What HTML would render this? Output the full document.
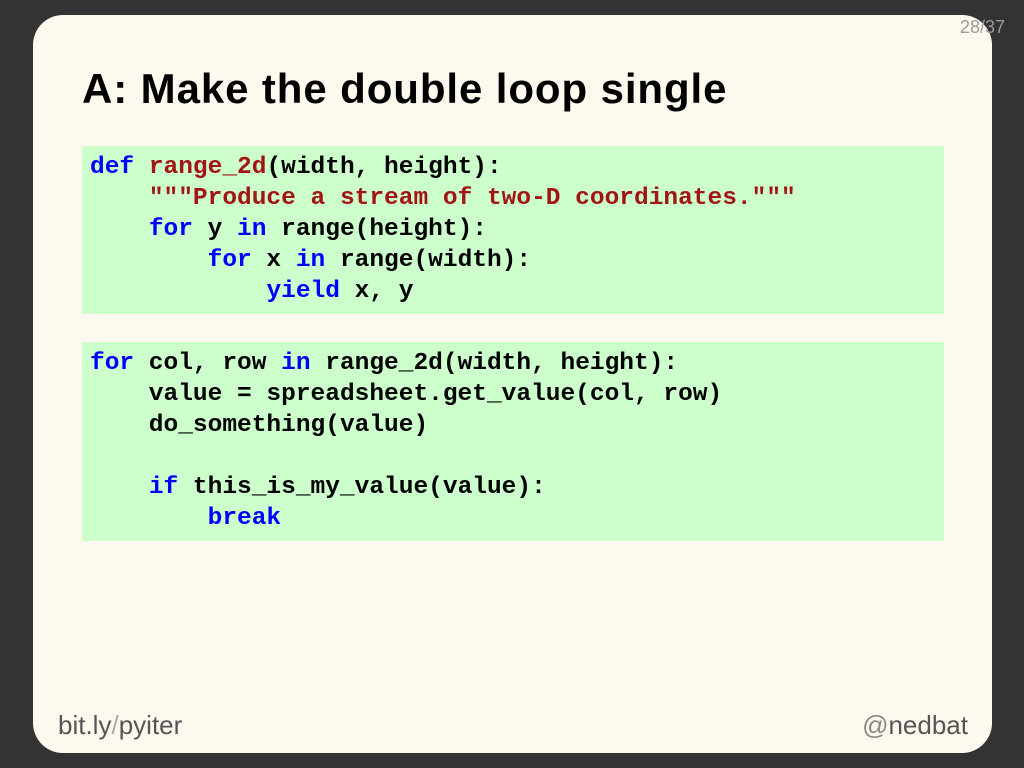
<!DOCTYPE html>
<html><head><style>
html,body{margin:0;padding:0;width:1024px;height:768px;background:#333;overflow:hidden}
.card{position:absolute;left:33px;top:15px;width:959px;height:738px;background:#fef9ef;border-radius:30px;}
.num{position:absolute;right:19px;top:17px;font:18px "Liberation Sans",sans-serif;color:#999}
h1{position:absolute;left:82px;top:64px;margin:0;font:bold 42px/50px "Liberation Sans",sans-serif;color:#000;letter-spacing:0.9px;white-space:nowrap}
pre{position:absolute;left:82px;width:854px;margin:0;padding:6px 0 0 8px;background:#ccffcc;font:bold 24.5px/31px "Liberation Mono",monospace;color:#000}
.k{color:#0000ff}.f{color:#a31515}
.foot{position:absolute;top:710px;font:26px "Liberation Sans",sans-serif;color:#555}
</style></head><body>
<div class="card"></div>
<div class="num">28/37</div>
<h1>A: Make the double loop single</h1>
<pre style="top:146px;height:162px"><span class="k">def</span> <span class="f">range_2d</span>(width, height):
    <span class="f">"""Produce a stream of two-D coordinates."""</span>
    <span class="k">for</span> y <span class="k">in</span> range(height):
        <span class="k">for</span> x <span class="k">in</span> range(width):
            <span class="k">yield</span> x, y</pre>
<pre style="top:342px;height:193px"><span class="k">for</span> col, row <span class="k">in</span> range_2d(width, height):
    value = spreadsheet.get_value(col, row)
    do_something(value)

    <span class="k">if</span> this_is_my_value(value):
        <span class="k">break</span></pre>
<div class="foot" style="left:58px">bit.ly<span style="color:#aaa">/</span>pyiter</div>
<div class="foot" style="right:56px"><span style="color:#888">@</span>nedbat</div>
</body></html>
